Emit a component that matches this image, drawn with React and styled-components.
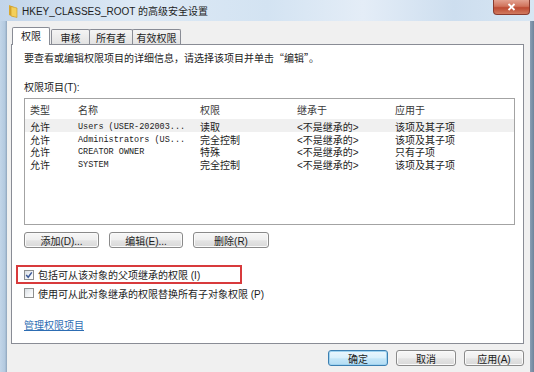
import React from 'react';
import styled, { createGlobalStyle } from 'styled-components';

const GlobalStyle = createGlobalStyle`
  html, body {
    margin: 0;
    padding: 0;
  }
  body {
    font-family: "Liberation Sans", "Noto Sans CJK SC", sans-serif;
    font-size: 10px;
    color: #1c1c1c;
  }
`;

const Window = styled.div`
  width: 534px;
  height: 372px;
  display: flex;
  flex-direction: column;
  overflow: hidden;
  background: #bcd0e4;
`;

const TitleBar = styled.div`
  height: 21px;
  flex: none;
  display: flex;
  align-items: center;
  padding-left: 8px;
  background: linear-gradient(90deg, #c2d5ea 0%, #dde9f5 25%, #d3e3f2 50%, #e4edf7 68%, #cddeef 85%, #d8e6f3 100%);
`;

const Title = styled.span`
  margin-left: 4px;
  font-size: 10px;
  color: #1e1e1e;
`;

const CloseButton = styled.div`
  margin-left: auto;
  margin-right: 4px;
  align-self: flex-start;
  width: 37px;
  height: 15px;
  box-sizing: border-box;
  border: 1px solid #8a3b2f;
  border-top: none;
  border-radius: 0 0 4px 4px;
  background: linear-gradient(#e3a190 0%, #d0735c 45%, #bd4a33 55%, #d17a5f 100%);
  display: flex;
  align-items: center;
  justify-content: center;
`;

const Body = styled.div`
  flex: 1;
  display: flex;
`;

const LeftFrame = styled.div`
  width: 7px;
  flex: none;
  background: linear-gradient(90deg, #c2d5e8 0%, #b3c9df 70%, #8ea4bb 100%);
`;

const RightFrame = styled.div`
  width: 4px;
  flex: none;
  background: linear-gradient(90deg, #8b9fb5 0%, #6f849b 100%);
`;

const Client = styled.div`
  flex: 1;
  background: #f0f0f0;
  padding: 6px 6px 0 4px;
  display: flex;
  flex-direction: column;
`;

const TabStrip = styled.div`
  height: 17px;
  display: flex;
  align-items: flex-end;
  padding-left: 1px;
  position: relative;
  z-index: 1;
`;

const Tab = styled.div`
  width: ${p => p.$w}px;
  height: ${p => (p.$active ? 18 : 15)}px;
  margin-bottom: ${p => (p.$active ? -1 : 0)}px;
  margin-right: ${p => (p.$active ? 1 : -1)}px;
  box-sizing: border-box;
  border: 1px solid #898c95;
  border-bottom: none;
  border-radius: 2px 2px 0 0;
  background: ${p => (p.$active ? '#ffffff' : 'linear-gradient(#f4f4f4, #e3e3e3)')};
  display: flex;
  align-items: center;
  justify-content: center;
  font-size: 10px;
  padding-bottom: ${p => (p.$active ? 2 : 0)}px;
`;

const Panel = styled.div`
  height: 300px;
  box-sizing: border-box;
  border: 1px solid #898c95;
  background: #ffffff;
  padding: 7px 8px 0 12px;
  display: flex;
  flex-direction: column;
`;

const Text = styled.div`
  height: 12px;
  line-height: 12px;
  margin-top: ${p => p.$mt || 0}px;
  white-space: nowrap;
  font-family: ${p => (p.$cjk ? '"Noto Sans CJK SC", sans-serif' : 'inherit')};
`;

const Mono = styled.span`
  font-family: "Liberation Mono", monospace;
  font-size: 8.5px;
  color: #222222;
  padding-top: 1px;
`;

const List = styled.div`
  height: 127px;
  margin-top: 4px;
  box-sizing: border-box;
  border: 1px solid #a3a3a3;
  background: #ffffff;
`;

const Row = styled.div`
  display: grid;
  grid-template-columns: 48px 122px 97px 98px 1fr;
  padding-left: 5px;
  height: ${p => (p.$header ? 20 : 12.5)}px;
  align-items: center;
  white-space: nowrap;
  background: ${p => (p.$hover ? '#f0f0f0' : 'transparent')};
  color: ${p => (p.$header ? '#3a3a3a' : '#1c1c1c')};
`;

const ButtonRow = styled.div`
  display: flex;
  gap: ${p => p.$gap}px;
  margin-top: ${p => p.$mt || 0}px;
  justify-content: ${p => (p.$right ? 'flex-end' : 'flex-start')};
`;

const Button = styled.div`
  width: ${p => p.$w}px;
  height: 16px;
  box-sizing: border-box;
  border: 1px solid ${p => (p.$default ? '#3c7fb1' : '#8a8a8a')};
  border-radius: 3px;
  background: ${p =>
    p.$default
      ? 'linear-gradient(#eaf6fd 0%, #d9f0fc 50%, #c4e6f8 55%, #b4dcf3 100%)'
      : 'linear-gradient(#f7f7f7 0%, #efefef 50%, #e3e3e3 55%, #d9d9d9 100%)'};
  box-shadow: inset 0 0 0 1px ${p => (p.$default ? '#9fd3f0' : '#fafafa')};
  display: flex;
  align-items: center;
  justify-content: center;
  font-size: 10px;
  white-space: nowrap;
`;

const Highlight = styled.div`
  width: 226px;
  height: 19px;
  box-sizing: border-box;
  margin-top: 17px;
  margin-left: -8px;
  padding-left: 6px;
  border: 2px solid #d83a3c;
  display: flex;
  align-items: center;
`;

const CheckRow = styled.label`
  display: flex;
  align-items: center;
  gap: 4px;
  height: 12px;
  margin-top: ${p => p.$mt || 0}px;
  white-space: nowrap;
`;

const Box = styled.span`
  width: 10px;
  height: 10px;
  flex: none;
  box-sizing: border-box;
  border: 1px solid #8e8f8f;
  background: linear-gradient(135deg, #d8dde3 0%, #f4f6f8 60%, #ffffff 100%);
  display: flex;
  align-items: center;
  justify-content: center;
`;

const Link = styled.a`
  margin-top: 21px;
  height: 12px;
  line-height: 12px;
  color: #2d6db3;
  text-decoration: underline;
  align-self: flex-start;
`;

const Footer = styled.div`
  padding-top: 6px;
`;

const FolderIcon = () => (
  <svg width="10" height="14" viewBox="0 0 10 14">
    <path d="M1 1 L6 3 L6 13 L1 11 Z" fill="#d9a830" />
    <path d="M3 2.5 L9 4 L9 13.5 L3 12 Z" fill="#f3cf5b" stroke="#c89522" strokeWidth="0.6" />
  </svg>
);

const CloseGlyph = () => (
  <svg width="9" height="8" viewBox="0 0 9 8">
    <path d="M1.5 1 L7.5 7 M7.5 1 L1.5 7" stroke="#ffffff" strokeWidth="1.8" />
  </svg>
);

const CheckMark = () => (
  <svg width="8" height="8" viewBox="0 0 8 8">
    <path d="M1.2 4 L3.2 6.2 L6.8 1.4" fill="none" stroke="#3d5a98" strokeWidth="1.5" />
  </svg>
);

const tabs = [
  { label: '权限', w: 38, active: true },
  { label: '审核', w: 39 },
  { label: '所有者', w: 44 },
  { label: '有效权限', w: 49 },
];

const entries = [
  { type: '允许', name: 'Users (USER-202003...', perm: '读取', from: '<不是继承的>', to: '该项及其子项' },
  { type: '允许', name: 'Administrators (US...', perm: '完全控制', from: '<不是继承的>', to: '该项及其子项' },
  { type: '允许', name: 'CREATOR OWNER', perm: '特殊', from: '<不是继承的>', to: '只有子项' },
  { type: '允许', name: 'SYSTEM', perm: '完全控制', from: '<不是继承的>', to: '该项及其子项' },
];

export default function App() {
  return (
    <Window>
      <GlobalStyle />
      <TitleBar>
        <FolderIcon />
        <Title>HKEY_CLASSES_ROOT 的高级安全设置</Title>
        <CloseButton>
          <CloseGlyph />
        </CloseButton>
      </TitleBar>
      <Body>
        <LeftFrame />
        <Client>
          <TabStrip>
            {tabs.map(t => (
              <Tab key={t.label} $w={t.w} $active={t.active}>
                {t.label}
              </Tab>
            ))}
          </TabStrip>
          <Panel>
            <Text $cjk>要查看或编辑权限项目的详细信息，请选择该项目并单击“编辑”。</Text>
            <Text $mt={18}>权限项目(T):</Text>
            <List>
              <Row $header>
                <span>类型</span>
                <span>名称</span>
                <span>权限</span>
                <span>继承于</span>
                <span>应用于</span>
              </Row>
              {entries.map((e, i) => (
                <Row key={e.name} $hover={i === 0}>
                  <span>{e.type}</span>
                  <Mono>{e.name}</Mono>
                  <span>{e.perm}</span>
                  <span>{e.from}</span>
                  <span>{e.to}</span>
                </Row>
              ))}
            </List>
            <ButtonRow $gap={10} $mt={7}>
              <Button $w={75}>添加(D)...</Button>
              <Button $w={74}>编辑(E)...</Button>
              <Button $w={76}>删除(R)</Button>
            </ButtonRow>
            <Highlight>
              <CheckRow>
                <Box>
                  <CheckMark />
                </Box>
                包括可从该对象的父项继承的权限 (I)
              </CheckRow>
            </Highlight>
            <CheckRow $mt={3}>
              <Box />
              使用可从此对象继承的权限替换所有子对象权限 (P)
            </CheckRow>
            <Link>管理权限项目</Link>
          </Panel>
          <Footer>
            <ButtonRow $gap={8} $right>
              <Button $w={60} $default>确定</Button>
              <Button $w={60}>取消</Button>
              <Button $w={60}>应用(A)</Button>
            </ButtonRow>
          </Footer>
        </Client>
        <RightFrame />
      </Body>
    </Window>
  );
}
